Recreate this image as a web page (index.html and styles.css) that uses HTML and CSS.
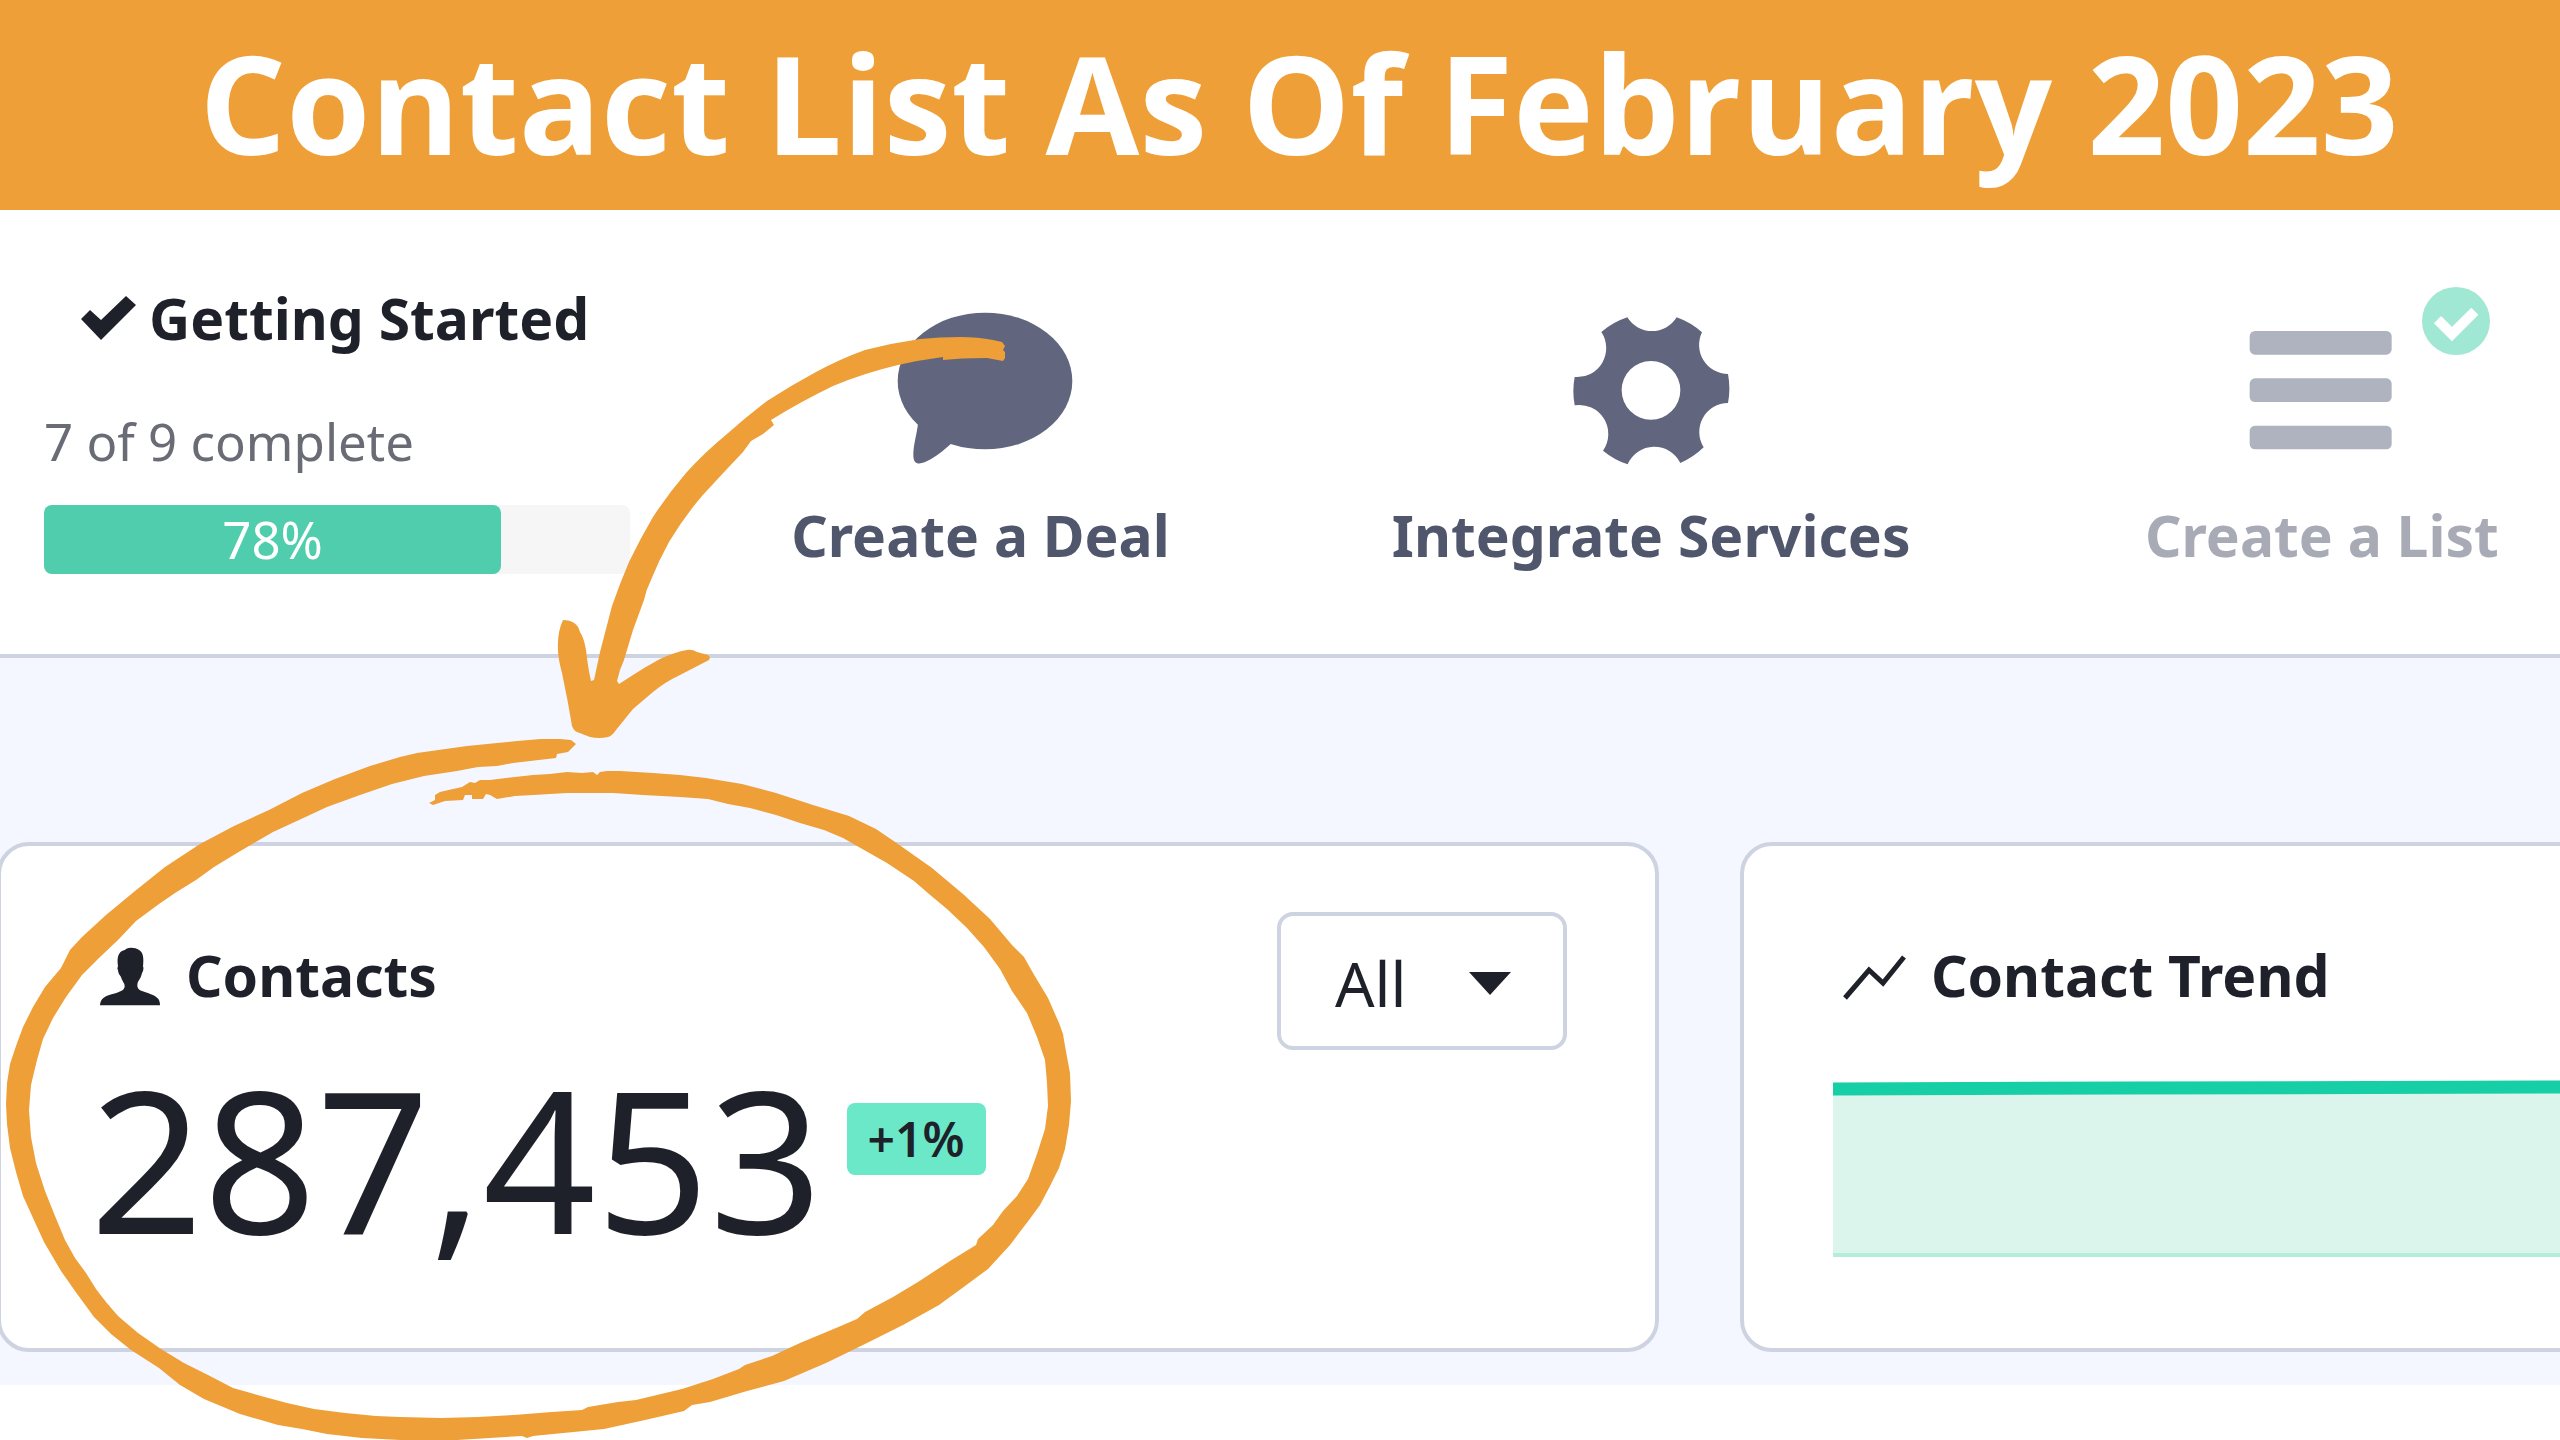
FILE: index.html
```html
<!DOCTYPE html>
<html lang="en">
<head>
    <meta charset="UTF-8">
    <meta name="viewport" content="width=device-width, initial-scale=1.0">
    <title>Contact List As Of February 2023</title>
    <link rel="stylesheet" href="styles.css">
</head>
<body>
    <header class="banner">
        <h1>Contact List As Of February 2023</h1>
    </header>

    <main>
        <section class="onboarding">
            <div class="progress">
                <h2 class="progress-title">
                    <svg class="check-icon" viewBox="81 298 55 44"><path d="M81 321 L90 312 L101 322 L126 298 L136 307 L101 342 Z"/></svg>
                    Getting Started
                </h2>
                <p>7 of 9 complete</p>
                <div class="bar">
                    <div class="bar-fill" style="width: 78%">78%</div>
                </div>
            </div>
            <a class="step" href="#">
                <span class="step-icon">
                    <svg viewBox="93 60 540 540">
                        <ellipse cx="378" cy="303" rx="262" ry="205"/>
                        <path d="M178 425 C172 470 163 495 163 525 C163 562 190 552 215 538 C240 524 260 506 278 490 L300 400 Z"/>
                    </svg>
                </span>
                Create a Deal
            </a>
            <a class="step" href="#">
                <span class="step-icon">
                    <svg viewBox="63 28 540 540">
                        <path fill-rule="evenodd" d="M262 80 A87 87 0 0 0 410 80 A232 232 0 0 1 486 125 A87 87 0 0 0 564 250 A232 232 0 0 1 564 337 A87 87 0 0 0 491 470 A232 232 0 0 1 421 517 A87 87 0 0 0 263 521 A232 232 0 0 1 189 480 A87 87 0 0 0 104 344 A232 232 0 0 1 104 259 A87 87 0 0 0 184 124 A232 232 0 0 1 262 80 Z M333 211 A88 88 0 0 0 333 387 A88 88 0 0 0 333 211 Z"/>
                    </svg>
                </span>
                Integrate Services
            </a>
            <a class="step done" href="#">
                <span class="step-icon">
                    <svg viewBox="36 90 540 540">
                        <rect x="89" y="183" width="426" height="71" rx="16"/>
                        <rect x="89" y="325" width="426" height="71" rx="16"/>
                        <rect x="89" y="467" width="426" height="71" rx="16"/>
                    </svg>
                    <svg class="done-mark" viewBox="608 50 202 202">
                        <circle cx="709" cy="151" r="101"/>
                        <path d="M654 147 L697 190 L765 122"/>
                    </svg>
                </span>
                Create a List
            </a>
        </section>

        <section class="cards">
            <article class="card total-card">
                <div class="card-head">
                    <h2>
                        <svg class="user-icon" viewBox="120 82 180 177"><path d="M120 260 C121 240 135 233 155 227 C180 219 192 216 194 204 C195 194 186 188 183 175 C178 168 175 165 174 155 C171 150 173 145 174 143 C171 120 173 105 186 97 C192 94 196 94 199 90 C210 85 228 87 236 93 C249 100 252 115 249 143 C252 148 250 158 246 163 C243 178 236 185 233 192 C230 205 234 213 246 217 C262 223 285 229 293 239 C299 245 300 253 300 260 Z"/></svg>
                        Contacts
                    </h2>
                    <div class="filter">
                        <select aria-label="Contact filter">
                            <option>All</option>
                        </select>
                        <svg viewBox="0 0 42 23"><path d="M0 0 H42 L21 23 Z"/></svg>
                    </div>
                </div>
                <div class="total">
                    <span class="total-value">287,453</span>
                    <span class="change">+1%</span>
                </div>
            </article>
            <article class="card trend">
                <div class="card-head">
                    <h2>
                        <svg class="trend-icon" viewBox="1842 946 62 59"><path d="M1844 998 L1868 970 L1882 983 L1903 957"/></svg>
                        Contact Trend
                    </h2>
                </div>
                <svg class="chart" viewBox="0 0 760 176" preserveAspectRatio="none">
                    <path class="chart-area" d="M0 7 L760 5 V174 H0 Z"/>
                    <path class="chart-base" d="M0 173 H760"/>
                    <path class="chart-line" d="M0 7 L300 6 L760 5"/>
                </svg>
            </article>
        </section>
    </main>

    <!-- hand drawn arrow and circle around the contact total -->
    <svg class="marker" width="1080" height="1140" viewBox="0 300 1080 1140">
        <path d="M1003 361 L1005 358 L1005 352 L1003 350 L1005 346 L1002 342 L993 340 Q978 337 960 337 Q940 337 920 339 Q892 343 865 350 Q840 359 816 372 Q790 386 767 401 Q746 417 727 434 Q705 452 686 473 Q668 494 653 517 Q640 539 629 562 Q620 583 612 606 L600 652 L594 680 L591 681 Q588 668 586 650 Q584 638 580 632 Q577 620 563 620 Q557 633 558 650 Q558 658 562 673 L568 703 L572 726 Q574 731 577 732 L590 737 Q599 739 608 737 Q612 736 616 730 L633 709 L653 692 Q665 682 680 675 L709 660 Q711 657 708 655 L697 652 Q692 649 687 650 Q675 652 660 659 Q645 667 633 675 L619 684 L617 681 L620 670 L624 660 L633 630 L644 600 Q646 590 651 580 Q659 560 669 542 Q684 517 702 496 Q722 474 743 452 L751 441 L763 434 L774 425 L771 420 Q800 402 833 386 Q864 373 898 365 Q920 360 943 357 L943 360 Q960 358 987 358 Z"/>
        <path d="M576 744 L571 740 L560 739 L541 739 L517 741 L467 746 L417 753 L400 757 L370 766 L335 779 L302 793 L269 810 L234 826 L200 844 L165 867 L135 891 L106 915 L82 937 L70 950 L61 968 L45 987 L33 1007 L23 1027 L16 1046 L10 1064 L7 1083 L6 1104 L7 1124 L10 1148 L16 1172 L23 1196 L33 1218 L44 1242 L61 1271 L75 1291 L94 1317 L111 1334 L131 1350 L159 1368 L180 1385 L204 1399 L240 1414 L278 1425 L302 1429 L327 1434 L362 1438 L400 1440 L457 1440 L522 1436 L527 1438 L533 1436 L604 1429 L645 1420 L684 1411 L692 1405 L710 1402 L747 1391 L784 1381 L826 1363 L865 1344 L903 1325 L939 1305 L965 1286 L988 1269 L1010 1245 L1029 1220 L1040 1205 L1049 1188 L1059 1168 L1065 1149 L1069 1125 L1071 1101 L1070 1073 L1065 1046 L1063 1034 L1059 1023 L1048 998 L1033 973 L1024 957 L1012 945 L990 919 L963 894 L932 868 L898 844 L876 829 L849 816 L813 805 L776 793 L742 784 L706 778 L680 775 L653 773 L620 771 L607 771 L600 772 L597 775 L593 772 L582 773 L567 772 L550 774 L533 775 L515 777 L490 780 L480 780 L475 783 L470 782 L462 787 L453 789 L440 792 L435 795 L435 800 L429 803 L433 805 L445 801 L463 800 L465 795 L472 795 L472 799 L483 799 L486 794 L490 795 L497 799 L515 796 L533 795 L567 793 L613 793 L643 795 L680 797 L708 799 L728 804 L750 808 L776 815 L800 823 L824 830 L843 838 L857 846 L887 863 L914 881 L929 894 L947 909 L967 928 L984 947 L1000 969 L1012 991 L1027 1013 L1037 1037 L1045 1060 L1047 1083 L1048 1106 L1045 1129 L1037 1154 L1028 1179 L1017 1196 L1003 1211 L993 1225 L978 1239 L976 1245 L950 1261 L918 1282 L893 1297 L865 1312 L857 1319 L836 1328 L800 1343 L772 1356 L745 1365 L739 1369 L713 1379 L682 1389 L636 1400 L618 1402 L588 1407 L582 1410 L552 1412 L514 1415 L478 1417 L441 1418 L400 1417 L376 1416 L345 1413 L314 1409 L287 1403 L261 1396 L233 1388 L208 1375 L184 1363 L161 1349 L138 1333 L118 1316 L106 1302 L96 1289 L86 1273 L75 1258 L65 1240 L55 1216 L45 1191 L36 1163 L31 1137 L29 1110 L31 1085 L37 1060 L43 1039 L53 1018 L66 997 L82 975 L99 958 L118 940 L136 921 L159 904 L175 893 L196 880 L214 867 L237 853 L254 843 L273 832 L299 820 L327 807 L360 795 L392 784 L424 776 L457 771 L478 767 L497 766 L513 763 L556 758 L557 754 L568 752 Z"/>
    </svg>
</body>
</html>
```
FILE: styles.css
```css
body {
    font-family: "Noto Sans", sans-serif;
    margin: 0;
    background-color: #fff;
    color: #1e2129;
    position: relative;
    overflow: hidden;
}
h1, h2, p {
    margin: 0;
}
h2 {
    display: flex;
    align-items: center;
    font-size: 57px;
    font-weight: 700;
    line-height: 60px;
}
svg {
    display: block;
    overflow: visible;
}
.banner {
    background-color: #ee9f37;
    padding: 0 0 4px 38px;
}
.banner h1 {
    font-family: "Open Sans", sans-serif;
    font-size: 136px;
    font-weight: 700;
    line-height: 206px;
    color: #fff;
    text-align: center;
    white-space: nowrap;
}
.onboarding {
    display: grid;
    grid-template-columns: 25.2% repeat(3, 26.2%);
    padding: 78px 0 80px;
    border-bottom: 4px solid #ced3e1;
    background-color: #fff;
    white-space: nowrap;
}
.progress {
    padding: 0 15px 0 44px;
}
.progress-title {
    gap: 13px;
    padding-left: 37px;
}
.check-icon {
    width: 55px;
    height: 44px;
    fill: #1e2129;
}
.progress p {
    margin: 63px 0 34px;
    font-size: 51px;
    line-height: 60px;
    color: #6a6c75;
}
.bar {
    border-radius: 8px;
    background-color: #f6f6f6;
}
.bar-fill {
    border-radius: 8px;
    background-color: #4fcdac;
    color: #fff;
    font-size: 51px;
    line-height: 69px;
    text-align: center;
}
.step {
    display: flex;
    flex-direction: column;
    align-items: center;
    gap: 25px;
    padding-top: 12px;
    font-size: 57px;
    font-weight: 700;
    line-height: 60px;
    color: #50576c;
    text-decoration: none;
}
.step-icon {
    position: relative;
    width: 180px;
    height: 180px;
    fill: #61667e;
}
.done {
    color: #a8abb5;
}
.done .step-icon {
    fill: #afb3bf;
}
.done-mark {
    position: absolute;
    top: -13px;
    left: 190px;
    width: 68px;
    height: 68px;
}
.done-mark circle {
    fill: #a0e8d3;
}
.done-mark path {
    fill: none;
    stroke: #fff;
    stroke-width: 30;
}
.cards {
    display: grid;
    grid-template-columns: 64.8% 1fr;
    gap: 81px;
    margin-bottom: 55px;
    padding: 184px 0 33px;
    background-color: #f4f7ff;
}
.card {
    box-sizing: border-box;
    height: 510px;
    padding: 66px 88px 0 89px;
    border: 4px solid #ced3e1;
    border-radius: 32px;
    background-color: #fff;
}
.total-card {
    margin-left: -3px;
}
.trend {
    margin-right: -100px;
}
.card-head {
    display: flex;
    justify-content: space-between;
    align-items: flex-start;
    min-height: 138px;
}
.card-head h2 {
    gap: 26px;
    padding: 33px 0 0 10px;
    white-space: nowrap;
}
.user-icon {
    width: 60px;
    height: 59px;
    fill: #1e2129;
}
.trend-icon {
    width: 62px;
    height: 59px;
    fill: none;
    stroke: #1e2129;
    stroke-width: 5;
}
.filter {
    position: relative;
}
.filter select {
    box-sizing: border-box;
    width: 290px;
    height: 138px;
    padding: 4px 0 0 54px;
    border: 4px solid #ced3e1;
    border-radius: 16px;
    background-color: #fff;
    color: #1e2129;
    font: 62px "Noto Sans", sans-serif;
    appearance: none;
}
.filter svg {
    position: absolute;
    top: 60px;
    right: 56px;
    width: 42px;
    height: 23px;
    fill: #1e2129;
    pointer-events: none;
}
.total {
    display: flex;
    align-items: flex-start;
    gap: 24px;
    padding-top: 7px;
}
.total-value {
    font-size: 198px;
    line-height: 200px;
}
.change {
    margin-top: 46px;
    padding: 0 21px;
    border-radius: 8px;
    background-color: #6ae8c8;
    font-size: 48px;
    font-weight: 600;
    line-height: 72px;
}
.chart {
    width: 100%;
    height: 176px;
    margin-top: 32px;
}
.chart-area {
    fill: #dbf5ec;
}
.chart-base {
    fill: none;
    stroke: #b5eddd;
    stroke-width: 4;
}
.chart-line {
    fill: none;
    stroke: #17cfa6;
    stroke-width: 13;
}
.marker {
    position: absolute;
    top: 300px;
    left: 0;
    fill: #ee9f37;
    pointer-events: none;
}
```
